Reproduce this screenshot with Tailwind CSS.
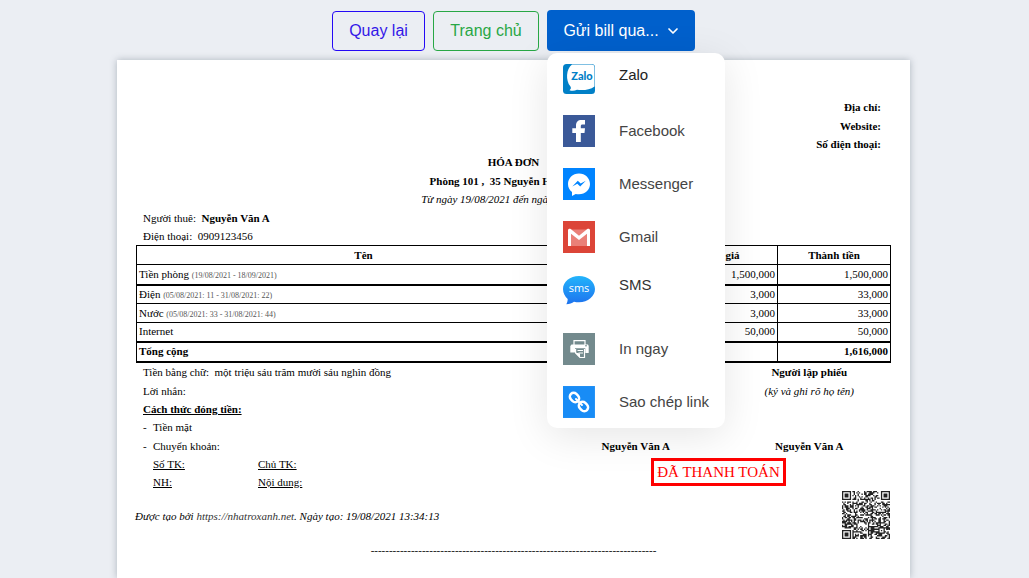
<!DOCTYPE html>
<html lang="vi">
<head>
<meta charset="utf-8">
<meta name="viewport" content="width=device-width, initial-scale=1">
<title>Hóa đơn</title>
<script src="https://cdn.jsdelivr.net/npm/@tailwindcss/browser@4"></script>
</head>
<body class="bg-[#ebeef3]">
<main class="flex min-h-screen flex-col items-center pr-[2px]">
  <div class="flex items-end gap-2 pt-[10px] font-['Liberation_Sans',Arial,sans-serif] text-base">
    <button type="button" class="h-10 w-[93px] rounded-sm border border-[#2409f5] text-[#3317e8]">Quay lại</button>
    <button type="button" class="h-10 w-[106px] rounded-sm border border-[#28a745] text-[#28a745]">Trang chủ</button>
    <div class="relative">
      <button type="button" aria-expanded="true" class="flex h-[41px] w-[148px] items-center justify-center gap-2 rounded-sm bg-[#0060cc] text-white">Gửi bill qua...
        <svg class="h-3 w-3" viewBox="0 0 12 12" fill="none" stroke="currentColor" stroke-width="1.700" stroke-linecap="round" stroke-linejoin="round"><path d="M2 4l4 4 4-4"/></svg>
      </button>
      <ul class="absolute left-0 top-[43px] z-10 w-[178px] rounded-[10px] bg-white text-[15px] leading-5 text-[#444] shadow-[0_8px_40px_rgba(0,0,0,0.1)]">
        <li><a href="#zalo" class="flex h-[52px] gap-6 px-4 pt-[11px]">
          <svg class="h-[30px] w-8" viewBox="0 0 32 30"><rect width="32" height="30" rx="3.5" fill="#0180c7"/><path d="M9 .5H28.500Q31.500 .5 31.500 3.500V22.500C27 26 20 26.500 14 25.800C11.500 27 9 27.200 6.500 26.200C8 25.300 8.300 23.800 7.300 22.300C2.500 16.500 3 5 9 .5Z" fill="#fff"/><text x="19" y="16" text-anchor="middle" font-family="Lato, sans-serif" font-weight="900" font-size="11" fill="#0180c7">Zalo</text></svg>
          <span class="pt-px text-[#222]">Zalo</span></a></li>
        <li><a href="#facebook" class="flex h-[53px] gap-6 px-4 pt-[10px]">
          <svg class="h-8 w-8" viewBox="0 0 32 32"><path d="M0 0h32v32H0z" fill="#3b5998"/><path d="M13 27V18H9.300V13.200H13V10.500C13 7 15 5 18.300 5H22V9.500H19.600C18.300 9.500 17.800 10 17.800 11.200V13.200H22L21.500 18H17.800V27Z" fill="#fff"/></svg>
          <span class="pt-[6px]">Facebook</span></a></li>
        <li><a href="#messenger" class="flex h-[53px] gap-6 px-4 pt-[10px]">
          <svg class="h-8 w-8" viewBox="0 0 32 32"><path d="M0 0h32v32H0z" fill="#0084ff"/><path d="M16 5.500C9.700 5.500 5 10.200 5 16C5 19.300 6.500 22.200 9 24.100V28L12.700 25.900C13.700 26.200 14.800 26.300 16 26.300C22.300 26.300 27 21.700 27 16C27 10.200 22.300 5.500 16 5.500Z" fill="#fff"/><path d="M9.300 18.500L14.800 12.800L17.700 15.500L22.800 12.800L17.200 18.600L14.300 15.800Z" fill="#0084ff"/></svg>
          <span class="pt-[6px]">Messenger</span></a></li>
        <li><a href="#gmail" class="flex h-[53px] gap-6 px-4 pt-[10px]">
          <svg class="h-8 w-8" viewBox="0 0 32 32"><path d="M0 0h32v32H0z" fill="#dc4538"/><path d="M7 8.500H25V25H7Z" fill="#ea8078"/><path d="M5 25V9.300C5 7.900 6.700 7.400 7.700 8.100L16 14.700L24.300 8.100C25.300 7.400 27 7.900 27 9.300V25H24V12.700L16 19L8 12.700V25Z" fill="#fff"/></svg>
          <span class="pt-[6px]">Gmail</span></a></li>
        <li><a href="#sms" class="flex h-[59px] gap-6 px-4 pt-[11px]">
          <svg class="h-[30px] w-8" viewBox="0 0 32 30"><defs><linearGradient id="sms" x2="0" y2="1"><stop stop-color="#23b4fb"/><stop offset="1" stop-color="#1d72ee"/></linearGradient></defs><path d="M16 1C7 1 0 6.800 0 14C0 18 2 21.500 4.700 24C4.700 26 4 28 3.300 29.300C6.500 29.200 9 28 11 26.800C12.500 27.200 14.200 27.300 16 27.300C25 27.300 32 21.300 32 14.100C32 6.800 25 1 16 1Z" fill="url(#sms)"/><text x="16" y="17" text-anchor="middle" font-family="Open Sans, sans-serif" font-size="11" fill="#fff">sms</text></svg>
          <span class="text-[#333]">SMS</span></a></li>
        <li><button type="button" class="flex h-[53px] w-full gap-6 px-4 pt-[10px]">
          <svg class="h-8 w-8" viewBox="0 0 32 32"><path d="M0 0h32v32H0z" fill="#738a8d"/><g fill="none" stroke="#fff" stroke-width="1.200"><path d="M11 12V7.700H22V12"/><path d="M12.600 16V20L17 24.500H21.500V16" fill="#738a8d"/><path d="M14.500 17.500H20M15.500 20H20"/></g><path d="M8.500 11.500H25L25.700 13V20H22.300V15.300H12V19.500H7.300V13Z" fill="#fff"/><path d="M12 19.500L17 20.500V24.700Z" fill="#fff"/><path d="M22 12.800h2" stroke="#738a8d"/></svg>
          <span class="pt-[6px]">In ngay</span></button></li>
        <li><button type="button" class="flex h-[52px] w-full gap-6 px-4 pt-[10px]">
          <svg class="h-8 w-8" viewBox="0 0 32 32"><path d="M0 0h32v32H0z" fill="#188cf6"/><g fill="none" stroke="#fff" stroke-width="2.500"><rect x="-5" y="-3.800" width="10" height="7.600" rx="3.800" transform="translate(11.500 11.500) rotate(45)"/><rect x="-5" y="-3.800" width="10" height="7.600" rx="3.800" transform="translate(20.500 20.500) rotate(45)"/><path d="M13 13L19 19" stroke-width="2" stroke-linecap="round"/></g></svg>
          <span class="whitespace-nowrap pt-[6px]">Sao chép link</span></button></li>
      </ul>
    </div>
  </div>

  <article class="mt-[9px] w-full max-w-[793px] grow bg-white px-[14px] pt-[38px] font-['Liberation_Serif','Times_New_Roman',serif] text-[11px] leading-[18px] text-black shadow-[0_0_7px_rgba(80,95,110,0.4)]">
    <div class="pr-[15px] text-right font-bold">
      <p>Địa chỉ:</p>
      <p class="mt-px">Website:</p>
      <p>Số điện thoại:</p>
    </div>
    <header class="text-center">
      <h1 class="font-bold">HÓA ĐƠN</h1>
      <p class="mt-px font-bold">Phòng 101 ,&nbsp; 35 Nguyễn Hữu Thuận</p>
      <p class="italic">Từ ngày 19/08/2021 đến ngày 18/09/2021</p>
    </header>
    <div class="mt-px pl-3">
      <p>Người thuê:&nbsp; <b>Nguyễn Văn A</b></p>
      <p>Điện thoại:&nbsp; 0909123456</p>
    </div>
    <div class="px-[5px]">
      <table class="w-full table-fixed border-collapse border border-black leading-[17px] [&_td]:border-r [&_td]:border-black [&_td]:px-[2px] [&_td]:py-0 [&_th]:border-r [&_th]:border-black [&_th]:py-0 [&_small]:text-[8px] [&_small]:leading-none [&_small]:text-[#555]">
        <colgroup><col><col class="w-[74px]"><col class="w-[113px]"><col class="w-[113px]"></colgroup>
        <thead><tr class="h-[19px]"><th>Tên</th><th></th><th>Đơn giá</th><th>Thành tiền</th></tr></thead>
        <tbody class="text-right [&_td:first-child]:text-left">
          <tr class="h-[20px] border-t border-black"><td>Tiền phòng <small>(19/08/2021 - 18/09/2021)</small></td><td></td><td>1,500,000</td><td>1,500,000</td></tr>
          <tr class="h-[19px] border-t-2 border-black"><td>Điện <small>(05/08/2021: 11 - 31/08/2021: 22)</small></td><td></td><td>3,000</td><td>33,000</td></tr>
          <tr class="h-[19px] border-t border-black"><td>Nước <small>(05/08/2021: 33 - 31/08/2021: 44)</small></td><td></td><td>3,000</td><td>33,000</td></tr>
          <tr class="h-[19px] border-t border-black"><td>Internet</td><td></td><td>50,000</td><td>50,000</td></tr>
          <tr class="h-[20px] border-y-2 border-black font-bold"><td>Tổng cộng</td><td></td><td></td><td>1,616,000</td></tr>
        </tbody>
      </table>
    </div>
    <div class="flex">
      <section class="grow pl-3">
        <p>Tiền bằng chữ:&nbsp; một triệu sáu trăm mười sáu nghìn đồng</p>
        <p class="mt-px">Lời nhắn:</p>
        <h2 class="font-bold underline">Cách thức đóng tiền:</h2>
        <ul>
          <li class="flex"><span class="w-[10px]">-</span>Tiền mặt</li>
          <li class="mt-px flex"><span class="w-[10px]">-</span>Chuyển khoản:</li>
        </ul>
        <div class="grid grid-cols-[105px_auto] pl-[10px] underline">
          <span>Số TK:</span><span>Chủ TK:</span>
          <span>NH:</span><span>Nội dung:</span>
        </div>
      </section>
      <section class="w-[347px] shrink-0 text-center">
        <div class="grid grid-cols-2">
          <b class="col-start-2">Người lập phiếu</b>
          <i class="col-start-2 mt-px">(ký và ghi rõ họ tên)</i>
          <b class="col-start-1 mt-[37px]">Nguyễn Văn A</b><b class="mt-[37px]">Nguyễn Văn A</b>
        </div>
        <div class="flex justify-center pt-[3px] pr-[8px]"><strong class="border-[3px] border-[#f00] px-[3px] text-[15px] leading-[22px] font-normal text-[#f00]">ĐÃ THANH TOÁN</strong></div>
      </section>
    </div>
    <footer>
      <div class="flex justify-between pr-[6px] pl-1">
        <p class="pt-4 italic">Được tạo bởi <a href="https://nhatroxanh.net" class="text-[#333]">https://nhatroxanh.net</a>. Ngày tạo: 19/08/2021 13:34:13</p>
        <svg id="qr" class="h-12 w-12" viewBox="0 0 37 37" role="img" aria-label="QR"></svg>
      </div>
      <p class="pt-[2px] text-center">------------------------------------------------------------------------------</p>
    </footer>
  </article>
</main>
<script>
// Fills the code's modules, then lays the finder squares over them.
const n = 37;
let seed = 71, d = '';
for (let y = 0; y < n; y++) for (let x = 0; x < n; x++) {
  seed = (seed * 1103515245 + 12345) % 2147483648;
  const finder = (x < 8 && (y < 8 || y > 28)) || (x > 28 && y < 8) || (x > 27 && x < 33 && y > 27 && y < 33);
  if (!finder && seed / 2147483648 < 0.52) d += `M${x} ${y}h1v1h-1z`;
}
for (const [x, y] of [[0, 0], [30, 0], [0, 30], [28, 28]]) {
  const s = x === 28 ? 5 : 7;
  d += `M${x} ${y}h${s}v${s}h-${s}zM${x + 1} ${y + 1}v${s - 2}h${s - 2}v-${s - 2}zM${x + 2} ${y + 2}h${s - 4}v${s - 4}h-${s - 4}z`;
}
document.getElementById('qr').innerHTML = `<path fill="#222" d="${d}"/>`;
</script>
</body>
</html>
